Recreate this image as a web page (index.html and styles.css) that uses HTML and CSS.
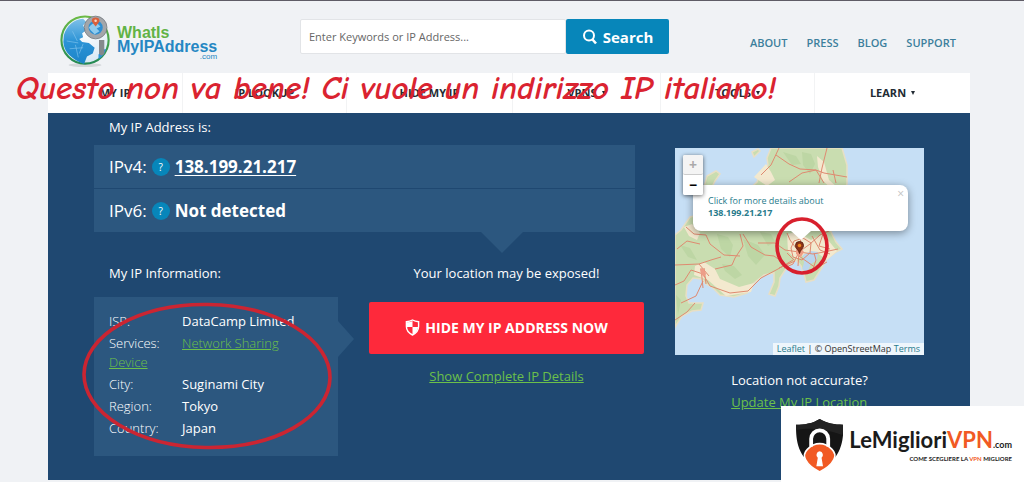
FILE: index.html
```html
<!DOCTYPE html>
<html lang="en">
<head>
<meta charset="utf-8">
<meta name="viewport" content="width=device-width, initial-scale=1">
<title>What Is My IP Address</title>
<link rel="stylesheet" href="styles.css">
</head>
<body>
<div class="page">
  <header class="header">
    <a class="logo" href="#">
      <svg class="logo-globe" viewBox="0 0 54 56" aria-hidden="true">
        <defs>
          <linearGradient id="ring" x1="0" y1="0" x2="0" y2="1"><stop offset="0" stop-color="#6cba45"/><stop offset="1" stop-color="#258a54"/></linearGradient>
          <radialGradient id="sea" cx=".55" cy=".3" r=".8"><stop offset="0" stop-color="#fff"/><stop offset="1" stop-color="#cfe4f2"/></radialGradient>
          <linearGradient id="land" x1="0" y1="0" x2="0" y2="1"><stop offset="0" stop-color="#7fc0e8"/><stop offset=".5" stop-color="#2b93d6"/><stop offset="1" stop-color="#1c84c8"/></linearGradient>
        </defs>
        <ellipse cx="26" cy="53" rx="17" ry="2" fill="#d3d6d9"/>
        <circle cx="26" cy="27" r="24.5" fill="url(#sea)" stroke="url(#ring)" stroke-width="2.2"/>
        <path d="M4 22C7 12 14 6 24 5l3 3-3 4 3 5-4 3 1 4-4 2 3 3 7 1 6 5-2 6-6 3-3 8C13 47 4 40 3.500 29z" fill="url(#land)"/>
        <path d="M7 28l12 2M10 36l14-1M13 18l5 10M16 32l3 13M24 31l-4 10" stroke="#8bc8ef" stroke-width=".6"/>
        <path d="M40 47q6-4 8-11l-3 1-5 5z" fill="#2b93d6"/>
        <path d="M40.500 27h5.500v14q-2.800 4-5.500 0z" fill="#85898d"/>
        <circle cx="37" cy="14" r="9.500" fill="#2f8fd2" stroke="#a3a6aa" stroke-width="4.200"/>
        <path d="M30 14q3-5 8-5l4 4-4 2 3 3-5 3-4-4z" fill="#8fcbee"/>
        <circle cx="37" cy="14" r="11.800" fill="none" stroke="#6d7378" stroke-width=".8"/>
        <path d="M37 13c-2-3-4-4-4-6a4 3.500 0 0 1 8 0c0 2-2 3-4 6z" fill="#d9603d"/>
        <circle cx="37" cy="7" r="1.300" fill="#f8d9c6"/>
      </svg>
      <span class="logo-text">
        <span class="logo-green">WhatIs</span>
        <span class="logo-blue">MyIPAddress</span>
        <span class="logo-com">.com</span>
      </span>
    </a>
    <form class="search">
      <input class="search-input" type="text" aria-label="Search" placeholder="Enter Keywords or IP Address...">
      <button class="search-button" type="button">
        <svg class="search-icon" viewBox="0 0 16 16" aria-hidden="true"><circle cx="7" cy="6.500" r="5" fill="none" stroke="#fff" stroke-width="2"/><path d="M10.500 10.500l3.500 4" stroke="#fff" stroke-width="2.600"/></svg>
        Search
      </button>
    </form>
    <nav class="top-links" aria-label="Site">
      <a href="#">ABOUT</a><a href="#">PRESS</a><a href="#">BLOG</a><a href="#">SUPPORT</a>
    </nav>
  </header>

  <nav class="menu" aria-label="Main">
    <a href="#">MY IP</a>
    <a href="#">IP LOOKUP</a>
    <a href="#">HIDE MY IP</a>
    <a href="#">VPNS <span class="caret"></span></a>
    <a href="#">TOOLS <span class="caret"></span></a>
    <a href="#">LEARN <span class="caret"></span></a>
  </nav>
  <p class="note">Questo non va bene! Ci vuole un indirizzo IP italiano!</p>

  <main class="main">
    <section class="details">
      <h1 class="label">My IP Address is:</h1>
      <div class="ip-panel">
        <div class="ip-row">IPv4: <button class="help" type="button" aria-label="About IPv4">?</button> <a class="ip-value" href="#">138.199.21.217</a></div>
        <div class="ip-row">IPv6: <button class="help" type="button" aria-label="About IPv6">?</button> <strong class="ip-value">Not detected</strong></div>
      </div>
      <div class="columns">
        <div>
          <h2 class="label">My IP Information:</h2>
          <div class="info">
            <p><span class="term">ISP:</span><span class="value">DataCamp Limited</span></p>
            <p><span class="term">Services:</span><a class="green" href="#">Network Sharing Device</a></p>
            <p><span class="term">City:</span><span class="value">Suginami City</span></p>
            <p><span class="term">Region:</span><span class="value">Tokyo</span></p>
            <p><span class="term">Country:</span><span class="value">Japan</span></p>
            <svg class="info-ring" viewBox="0 0 250 148" preserveAspectRatio="none" aria-hidden="true"><ellipse cx="125" cy="74" rx="123" ry="71.500" transform="rotate(1 125 74)" fill="none" stroke="#cb2532" stroke-width="3.600"/></svg>
          </div>
        </div>
        <div class="action">
          <p class="label">Your location may be exposed!</p>
          <button class="hide-button" type="button">
            <svg class="shield" viewBox="0 0 16 18" aria-hidden="true"><path d="M8 1c2 1.200 4 1.700 6.500 1.800V8c0 4.500-2.500 7-6.500 9C4 15 1.500 12.500 1.500 8V2.800C4 2.700 6 2.200 8 1z" fill="none" stroke="#fff" stroke-width="1.500"/><path d="M8 2v6.500H2V3.500Q6 3.500 8 2zM8 8.500h6q-.500 5.500-6 8z" fill="#fff"/></svg>
            HIDE MY IP ADDRESS NOW
          </button>
          <a class="green" href="#">Show Complete IP Details</a>
        </div>
      </div>
    </section>

    <section class="location">
      <div class="map">
        <svg class="map-art" viewBox="0 0 249 207" preserveAspectRatio="xMidYMid slice" aria-hidden="true">
          <rect width="249" height="207" fill="#c6dff5"/>
          <g stroke="#e8dfc4" stroke-width="1.500">
            <path fill="#c9ddb0" d="M96 0L92 10 93 17 86 23 82 34 72 43 56 48 45 62 28 66 15 69 6 82 0 87V179L7 168 17 163 26 162 28 155 14 155 11 148 12 137 18 130 27 131 31 136 37 139 45 147 59 149 72 145 79 135 89 127 99 125 99 134 94 146 100 148 104 138 105 130 112 119 121 112 126 118 129 126 131 134 139 132 146 121 152 111 161 104 167 101 161 94 156 84 156 69 164 55 172 36 172 17 167 0z"/>
            <path fill="#c9ddb0" d="M29 39l3-11 9-5 4 3-5 7-3 6zM77 4l6-3 2 2-6 6z"/>
          </g>
          <g fill="#f3e9cf">
            <path d="M20 118l9-4 11 7 5 10 19 8 15-4-3 9-25 4-18-16-14-5zM112 86l10-2 14 8 12-6 14 17-10 9-11-8-11 2-9 6-8-9z"/>
            <path d="M9 79l8-3 8 9-3 7-8-4zM79 29l12-13 5 8 4 8-8 6zM142 8l7 6 5 18 8 7-4 3-10-9-5-14z"/>
          </g>
          <g fill="#bdd6a4">
            <path d="M42 86l11 3 5 8-3 12-9-8zM68 91l15 6 7 10-9 10-8-9zM47 116l12 2 8 9-7 4-10-8zM108 4l13 4 5 8-9 1zM5 97l10 3 7 12-9-3zM127 4l9 2 4 10-5 10-7-9zM85 84l11 2 4 8-7 4zM1 147l5 5-3 15z"/>
          </g>
          <path d="M128 107l8-4 7 1-1 8-6 4-4 9-5-4 2-6z" fill="#bad5ee"/>
          <g fill="none" stroke="#df8a70" stroke-width="1">
            <path d="M101 7l13 9 11 5 16 1 8 13M152 0l-5 20-3 15M172 29l-23-4-8-3M104 0l-8 17-10 10M11 79l8 7 12 1 4 9 14 11 16 1M0 137l9-4 7-11 12 4 7 12 20 7 18-2 13-13 17-9 15-9M65 86l3 12-8 12-3 7-17 4M68 86l8 13 14 8 9 1 10 7M0 117l24-1 10 12M24 116l12-4 10-3M6 155l15-7 7-15M2 101l10-8 13 3M158 22l3 13M141 22l-14 3-13 9M0 172l12-8 8-9"/>
            <path d="M124 104l-14-2-10-7-17 0M124 104l-9-12-3-7M124 104l2-15 1-12M124 104l11-8 10-9 9-4M124 104l14 2 11-2 14-3M124 104l-6 12-9 4M124 104l-1 14M124 108l17 12 11-6M116 100l3-7 9-3 8 5-1 10-8 7-9-3z"/>
            <path d="M112 105l7 7M137 88l8 14 10 4M148 86l-4 12 11 3M104 120l16-7M138 121l3-9-2-7M26 120l2 20M29 120l2 16"/>
          </g>
          <path d="M25 121l4 0 2 5-2 3-3-3z" fill="#ed9e88"/>
          <path d="M121 101l5-1 3 4-3 5-5-3z" fill="#ef9c84"/>
        </svg>
        <div class="popup">
          <a href="#">Click for more details about<br><strong>138.199.21.217</strong></a>
          <button class="popup-close" type="button" aria-label="Close">×</button>
        </div>
        <svg class="pin" viewBox="0 0 9 13" aria-hidden="true"><path d="M4.500 12.500C4 9 .5 7.500.5 4.500a4 4 0 0 1 8 0c0 3-3.500 4.500-4 8z" fill="#8f3417" stroke="#5f2513"/><circle cx="4.500" cy="4.500" r="1.700" fill="#ee8a20"/></svg>
        <svg class="map-ring" viewBox="0 0 54 58" aria-hidden="true"><ellipse cx="27" cy="29" rx="25" ry="27" fill="none" stroke="#d8202d" stroke-width="3.600"/></svg>
        <div class="zoom">
          <button type="button" aria-label="Zoom in" disabled>+</button>
          <button type="button" aria-label="Zoom out">−</button>
        </div>
        <p class="credit"><a href="#">Leaflet</a> | © OpenStreetMap <a href="#">Terms</a></p>
      </div>
      <div class="update">
        <p>Location not accurate?</p>
        <a class="green" href="#">Update My IP Location</a>
      </div>
    </section>
  </main>
</div>

<aside class="brand">
  <svg class="brand-icon" viewBox="0 0 50 56" aria-hidden="true">
    <path d="M25 0C33 5 41 6 50 6c0 17-1 34-25 49C1 40 0 23 0 6 9 6 17 5 25 0z" fill="#151515"/>
    <path d="M25 0C33 5 41 6 50 6c0 4 0 7-1 11C34 12 17 8 0 12V6C9 6 17 5 25 0z" fill="#222"/>
    <path d="M25 26c5 0 9 2 13 6 4 4 4 7 2 11-3 6-9 10-15 13-6-3-12-7-15-13-2-4-2-7 2-11 4-4 8-6 13-6z" fill="#f15a24" stroke="#fff" stroke-width="1.800"/>
    <path d="M16 29V21a9 9 0 0 1 18 0v8" fill="none" stroke="#fff" stroke-width="4"/>
    <path d="M25 34a4 4 0 0 1 2 7l1.500 9h-7L23 41a4 4 0 0 1 2-7z" fill="#fff"/>
  </svg>
  <div class="brand-text">
    <div class="brand-name">LeMigliori<span class="brand-vpn">VPN</span><span class="brand-com">.com</span></div>
    <div class="brand-tag">COME SCEGLIERE LA <span class="brand-vpn">VPN</span> MIGLIORE</div>
  </div>
</aside>
</body>
</html>
```
FILE: styles.css
```css
* {
  box-sizing: border-box;
}

body {
  margin: 0;
  background: #f0f2f5;
  border-top: 1px solid #5f5c66;
  font-family: "Open Sans", sans-serif;
  font-size: 13px;
  line-height: 20px;
  color: #fff;
}

p, h1, h2 {
  margin: 0;
}

button, input {
  font-family: inherit;
  margin: 0;
}

.page {
  position: relative;
  padding: 0 54px 2px 48px;
}

/* Header */
.header {
  display: flex;
  height: 72px;
  padding: 0 14px 0 12px;
}

.logo {
  display: flex;
  flex: 0 0 240px;
  gap: 5px;
  padding-top: 13px;
  text-decoration: none;
}

.logo-globe {
  width: 52px;
  height: 54px;
}

.logo-text {
  display: flex;
  flex-direction: column;
  padding-top: 12px;
  font-family: "Liberation Sans", sans-serif;
  font-weight: bold;
  font-size: 16px;
  line-height: 14px;
}

.logo-green {
  color: #62b345;
}

.logo-blue {
  color: #2587c3;
}

.logo-com {
  align-self: flex-end;
  font-size: 8px;
  font-weight: normal;
  line-height: 6px;
  color: #2587c3;
}

.search {
  display: flex;
  flex: 0 1 369px;
  height: 35px;
  margin-top: 18px;
}

.search-input {
  flex: 1;
  min-width: 0;
  padding: 0 8px;
  border: 1px solid #e2e4e7;
  border-radius: 2px;
  background: #fff;
  font-size: 11px;
  color: #555;
}

.search-input::placeholder {
  color: #666;
}

.search-button {
  display: flex;
  align-items: center;
  justify-content: center;
  gap: 5px;
  width: 103px;
  padding: 0;
  border: 0;
  border-radius: 2px;
  background: #0786ba;
  color: #fff;
  font-size: 15px;
  font-weight: 700;
}

.search-icon {
  width: 16px;
  height: 16px;
}

.top-links {
  display: flex;
  gap: 19px;
  margin-left: auto;
  padding-top: 32px;
  font-size: 11px;
  font-weight: 600;
}

.top-links a {
  color: #3c7f9c;
  text-decoration: none;
}

/* Main menu */
.menu {
  display: grid;
  grid-template-columns: 135fr 164fr 166fr 148fr 154fr 155fr;
  height: 40px;
  background: #fff;
}

.menu a {
  display: flex;
  align-items: center;
  justify-content: center;
  gap: 5px;
  border-right: 1px solid #f2f3f4;
  color: #222b33;
  font-size: 11px;
  font-weight: 700;
  text-decoration: none;
}

.menu a:last-child {
  border-right: 0;
}

.caret {
  border: solid transparent;
  border-width: 4px 2px 0;
  border-top-color: #222b33;
}

/* Handwritten remark lying over the menu */
.note {
  position: absolute;
  top: 67px;
  left: 16px;
  color: #da2330;
  font-family: "Comic Neue", "Comic Sans MS", "Open Sans", sans-serif;
  font-size: 33px;
  font-style: italic;
  font-weight: 600;
  line-height: 40px;
  white-space: nowrap;
}

/* IP panel */
.main {
  display: grid;
  grid-template-columns: 550fr 249fr;
  gap: 31px;
  padding: 4px 46px 24px;
  background: #1f4871;
}

.label {
  padding-left: 15px;
  font-size: 13px;
  font-weight: 400;
  line-height: 20px;
}

.ip-panel {
  position: relative;
  display: grid;
  gap: 1px;
  margin: 8px 9px 31px 0;
}

.ip-panel::after {
  content: "";
  position: absolute;
  top: 100%;
  left: 387px;
  border: solid transparent;
  border-width: 21px 21px 0;
  border-top-color: #2c577f;
}

.ip-row {
  display: flex;
  align-items: center;
  gap: 5px;
  height: 43px;
  padding-left: 15px;
  background: #2c577f;
  font-size: 17px;
}

.help {
  width: 18px;
  height: 18px;
  padding: 0;
  border: 0;
  border-radius: 50%;
  background: #0786ba;
  color: #fff;
  font-size: 10px;
  line-height: 18px;
}

.ip-value {
  color: #fff;
  font-weight: 700;
  text-underline-offset: 2px;
}

.columns {
  display: grid;
  grid-template-columns: 244fr 275fr;
  gap: 31px;
}

.info {
  position: relative;
  display: grid;
  gap: 3px;
  margin-top: 14px;
  padding: 15px 24px 18px 15px;
  background: #2c577f;
  font-weight: 300;
  line-height: 19px;
}

.info::after {
  content: "";
  position: absolute;
  top: 24px;
  left: 100%;
  border: solid transparent;
  border-width: 18px 0 18px 16px;
  border-left-color: #2c577f;
}

.info-ring {
  position: absolute;
  z-index: 1;
  top: 5px;
  left: -12px;
  width: 250px;
  height: 148px;
}

.term {
  display: inline-block;
  width: 73px;
}

.value {
  font-weight: 400;
}

.green {
  color: #6cc04a;
}

.action {
  text-align: center;
}

.action .label {
  padding: 0;
}

.hide-button {
  display: flex;
  align-items: center;
  justify-content: center;
  gap: 5px;
  width: 100%;
  height: 52px;
  margin: 19px 0 12px;
  padding: 0 0 2px;
  border: 0;
  border-radius: 2px;
  background: #fe293b;
  color: #fff;
  font-size: 14px;
  font-weight: 700;
}

.shield {
  width: 15px;
  height: 17px;
}

/* Map */
.map {
  position: relative;
  height: 207px;
  margin-top: 31px;
  font-size: 9px;
}

.map-art {
  display: block;
  width: 100%;
  height: 100%;
}

.map a {
  color: #287b8c;
  text-decoration: none;
}

.popup {
  position: absolute;
  top: 37px;
  left: 18px;
  width: 215px;
  padding: 10px 15px 12px;
  border-radius: 8px;
  background: #fff;
  box-shadow: 0 2px 8px rgba(0, 0, 0, 0.4);
  line-height: 12px;
}

.popup::after {
  content: "";
  position: absolute;
  top: 100%;
  left: 98px;
  border: solid transparent;
  border-width: 9px 10px 0;
  border-top-color: #fff;
}

.popup-close {
  position: absolute;
  top: 2px;
  right: 4px;
  padding: 0;
  border: 0;
  background: none;
  color: #c3c3c3;
  font-size: 12px;
  line-height: 14px;
}

.pin {
  position: absolute;
  top: 93px;
  left: 120px;
  width: 9px;
  height: 13px;
}

.map-ring {
  position: absolute;
  top: 69px;
  left: 100px;
  width: 54px;
  height: 58px;
}

.zoom {
  position: absolute;
  top: 7px;
  left: 8px;
  display: grid;
  width: 20px;
  border-radius: 2px;
  background: #fff;
  box-shadow: 0 1px 4px rgba(0, 0, 0, 0.6);
}

.zoom button {
  height: 20px;
  padding: 0;
  border: 0;
  border-radius: 2px;
  background: #fff;
  color: #000;
  font-size: 14px;
  font-weight: 700;
  line-height: 20px;
}

.zoom button:disabled {
  border-bottom: 1px solid #ccc;
  background: #f4f4f4;
  color: #aaa;
}

.credit {
  position: absolute;
  right: 0;
  bottom: 0;
  padding: 0 4px;
  background: rgba(255, 255, 255, 0.7);
  color: #333;
  line-height: 12px;
}

.update {
  width: fit-content;
  margin: 14px auto 0;
  line-height: 22px;
}

/* Sponsor badge in the window's corner */
.brand {
  position: fixed;
  right: 0;
  bottom: 0;
  display: flex;
  gap: 6px;
  width: 243px;
  height: 76px;
  padding: 11px 12px 0 15px;
  background: #fff;
  color: #1b1b1b;
  font-family: Lato, sans-serif;
}

.brand-icon {
  width: 50px;
  height: 57px;
}

.brand-text {
  padding-top: 12px;
  white-space: nowrap;
}

.brand-name {
  font-size: 22px;
  font-weight: 700;
  line-height: 22px;
}

.brand-vpn {
  color: #f15a24;
}

.brand-com {
  font-size: 9px;
}

.brand-tag {
  font-size: 6px;
  font-weight: 700;
  line-height: 6px;
  text-align: right;
}
```
